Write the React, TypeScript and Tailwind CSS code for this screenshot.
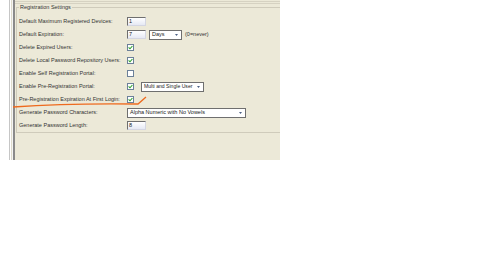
import React from "react";

const Check = ({ checked }: { checked: boolean }) => (
  <div className="w-[7px] h-[7px] border border-[#6c8099] bg-white flex items-center justify-center">
    {checked && (
      <svg width="5" height="5" viewBox="0 0 5 5">
        <path d="M0.6 2.4 L2 3.8 L4.4 1" stroke="#2aa12a" strokeWidth="1.1" fill="none" />
      </svg>
    )}
  </div>
);

const Input = ({ value }: { value: string }) => (
  <div className="w-[19px] h-[9px] bg-gradient-to-b from-white to-[#e6e9f4] border border-t-[#6f6f6f] border-l-[#6f6f6f] border-r-[#d4d6e2] border-b-[#d4d6e2] flex items-center pl-[1px] text-[5.5px] leading-none text-[#222]">
    {value}
  </div>
);

const Select = ({ value, w, small }: { value: string; w: string; small?: boolean }) => (
  <div className={`${w} h-[10px] bg-white border border-[#6f6f6f] flex items-center justify-between pl-[2px] pr-[3px] ${small ? "text-[5.1px]" : "text-[5.5px]"} leading-none text-[#222] whitespace-nowrap`}>
    <span>{value}</span>
    <svg width="3" height="2" viewBox="0 0 3 2">
      <path d="M0 0 L3 0 L1.5 2 Z" fill="#4d6185" />
    </svg>
  </div>
);

const Row = ({ label, children }: { label: string; children?: React.ReactNode }) => (
  <div className="h-[13px] flex items-center">
    <div className="w-[108px] text-[5.5px] leading-none text-[#333] whitespace-nowrap">{label}</div>
    <div className="flex items-center">{children}</div>
  </div>
);

export default function App() {
  return (
    <div className="w-[490px] h-[276px] bg-white relative overflow-hidden font-['Liberation_Sans',Arial,sans-serif]">
      <div className="ml-[9px] w-[271px] h-[160px] flex bg-[#ece9d8] overflow-hidden">
        <div className="w-px bg-[#c6c6c6]" />
        <div className="w-px bg-white" />
        <div className="w-px bg-[#dedbcb]" />
        <div className="w-px bg-[#f4f4f4]" />
        <div className="w-[2px] bg-[#8a8a8a]" />
        <div className="flex-1 flex flex-col">
          <div className="h-px mt-px bg-[#d6d2c2]" />
          <div className="h-px mt-px bg-[#d6d2c2]" />
          <div className="relative mt-[3px] ml-px border-t border-l border-b border-[#cfcbbb] pt-[7px] pl-[2px]">
            <div className="absolute -top-[4px] left-[2px] bg-[#ece9d8] px-px text-[5.5px] leading-[7px] text-[#333]">
              Registration Settings
            </div>
            <Row label="Default Maximum Registered Devices:">
              <Input value="1" />
            </Row>
            <Row label="Default Expiration:">
              <Input value="7" />
              <div className="ml-[3px]">
                <Select value="Days" w="w-[33px]" />
              </div>
              <span className="ml-[3px] text-[5.5px] leading-none text-[#333]">(0=never)</span>
            </Row>
            <Row label="Delete Expired Users:">
              <Check checked />
            </Row>
            <Row label="Delete Local Password Repository Users:">
              <Check checked />
            </Row>
            <Row label="Enable Self Registration Portal:">
              <Check checked={false} />
            </Row>
            <Row label="Enable Pre-Registration Portal:">
              <Check checked />
              <div className="ml-[7px]">
                <Select value="Multi and Single User" w="w-[63px]" small />
              </div>
            </Row>
            <Row label="Pre-Registration Expiration At First Login:">
              <Check checked />
            </Row>
            <Row label="Generate Password Characters:">
              <Select value="Alpha Numeric with No Vowels" w="w-[119px]" />
            </Row>
            <Row label="Generate Password Length:">
              <Input value="8" />
            </Row>
          </div>
        </div>
      </div>
      <svg className="absolute left-0 top-0" width="490" height="276" viewBox="0 0 490 276">
        <path d="M13 107 Q70 103 138 104 L146 97" stroke="#ee6a1e" strokeWidth="1.3" fill="none" />
      </svg>
    </div>
  );
}
